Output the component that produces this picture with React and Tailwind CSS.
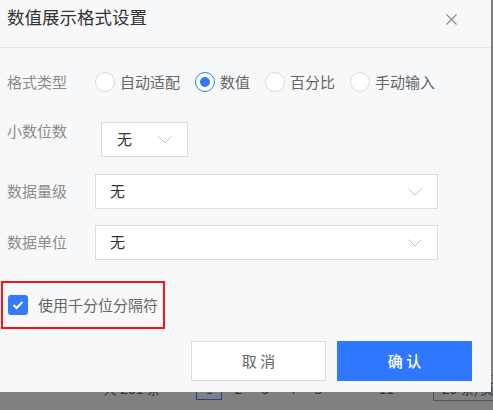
import React, { useState } from 'react';

const FONT = { fontFamily: '"Noto Sans CJK SC", "Noto Sans", sans-serif' };

const TYPES = ['自动适配', '数值', '百分比', '手动输入'];

function Chevron({ className }) {
  return (
    <svg width="14" height="8" viewBox="0 0 14 8" className={className} fill="none">
      <path d="M0.5 0.5 L7 7 L13.5 0.5" stroke="#bfbfbf" strokeWidth="1" />
    </svg>
  );
}

function Select({ className, value }) {
  return (
    <div className={`flex items-center justify-between bg-white border border-[#dcdcdc] h-[35px] ${className}`}>
      <span className="text-[15px] text-[#333]">{value}</span>
      <Chevron />
    </div>
  );
}

export default function App() {
  const [type, setType] = useState('数值');
  const [thousands, setThousands] = useState(true);

  return (
    <div className="relative w-[493px] h-[410px] bg-[#808080] overflow-hidden" style={FONT}>
      {/* 背景里的分页 */}
      <div className="absolute left-0 top-[376px] w-[600px] h-[24px] flex items-center text-[14px] text-[#333] whitespace-nowrap">
        <span className="ml-[103px]">共 201 条</span>
        <span className="ml-[18px]">&lt;</span>
        <span className="ml-[10px] w-[26px] h-[24px] border border-[#22409a] flex items-center justify-center text-[#22409a]">1</span>
        <span className="ml-[12px]">2</span>
        <span className="ml-[19px]">3</span>
        <span className="ml-[19px]">4</span>
        <span className="ml-[19px]">5</span>
        <span className="ml-[56px]">11</span>
        <span className="ml-[18px]">&gt;</span>
        <span className="ml-[13px] h-[26px] border border-[#555] px-[8px] flex items-center">20 条/页</span>
      </div>

      {/* 弹窗 */}
      <div className="absolute left-0 top-0 w-[491px] h-[392px] bg-[#f7f8fa] flex flex-col">
        <div className="h-[48px] border-b border-[#e6e6e6] flex items-start justify-between px-[7px] pt-[5px]">
          <h2 className="text-[17.5px] leading-[24px] text-[#333]">数值展示格式设置</h2>
          <button type="button" className="mr-[27px] mt-[9px]">
            <svg width="11" height="11" viewBox="0 0 11 11" fill="none">
              <path d="M0.5 0.5 L10.5 10.5 M10.5 0.5 L0.5 10.5" stroke="#8c8c8c" strokeWidth="1.1" />
            </svg>
          </button>
        </div>

        <div className="flex items-center h-[20px] mt-[24px] pl-[7px]">
          <span className="w-[88px] text-[15px] text-[#8c8c8c]">格式类型</span>
          {TYPES.map((t) => (
            <label key={t} className="flex items-center mr-[15px] cursor-pointer" onClick={() => setType(t)}>
              {type === t ? (
                <span className="w-[20px] h-[20px] rounded-full border border-[#2f77fe] bg-white flex items-center justify-center">
                  <span className="w-[10px] h-[10px] rounded-full bg-[#2f77fe]" />
                </span>
              ) : (
                <span className="w-[20px] h-[20px] rounded-full border border-[#dadada] bg-white" />
              )}
              <span className="ml-[5px] text-[15px] text-[#666]">{t}</span>
            </label>
          ))}
        </div>

        <div className="flex items-start mt-[29px] pl-[7px]">
          <span className="w-[94px] text-[15px] leading-[20px] text-[#8c8c8c]">小数位数</span>
          <Select className="w-[87px] mt-[1px] pl-[15px] pr-[15px]" value="无" />
        </div>

        <div className="flex items-center mt-[17px] pl-[7px]">
          <span className="w-[88px] text-[15px] text-[#8c8c8c]">数据量级</span>
          <Select className="w-[343px] pl-[14px] pr-[15px]" value="无" />
        </div>

        <div className="flex items-center mt-[16px] pl-[7px]">
          <span className="w-[88px] text-[15px] text-[#8c8c8c]">数据单位</span>
          <Select className="w-[343px] pl-[14px] pr-[15px]" value="无" />
        </div>

        <div
          className="ml-[1px] mt-[21px] w-[164px] h-[48px] border-2 border-[#ff1010] flex items-center pl-[5px] cursor-pointer"
          onClick={() => setThousands(!thousands)}
        >
          <span className={`w-[20px] h-[20px] rounded-[3px] flex items-center justify-center ${thousands ? 'bg-[#3479fe]' : 'bg-white border border-[#dadada]'}`}>
            {thousands && (
              <svg width="12" height="10" viewBox="0 0 12 10" fill="none">
                <path d="M1.5 5 L4.5 8 L10.5 2" stroke="white" strokeWidth="2" />
              </svg>
            )}
          </span>
          <span className="ml-[10px] text-[15px] text-[#666]">使用千分位分隔符</span>
        </div>

        <div className="flex justify-end gap-[11px] mt-[12px] pr-[19px]">
          <button type="button" className="w-[135px] h-[40px] bg-white border border-[#dcdcdc] text-[15px] text-[#666]">
            取 消
          </button>
          <button type="button" className="w-[135px] h-[40px] bg-[#2f77fe] text-[15px] font-medium text-white">
            确 认
          </button>
        </div>
      </div>
    </div>
  );
}
